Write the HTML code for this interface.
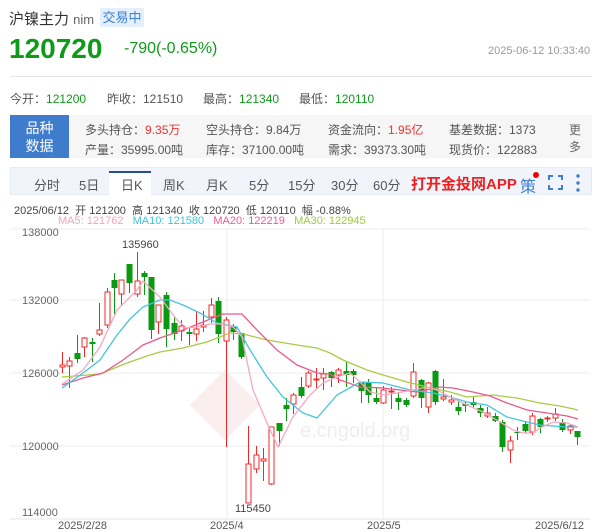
<!DOCTYPE html>
<html><head><meta charset="utf-8"><style>
*{margin:0;padding:0;box-sizing:border-box}
body{width:600px;height:532px;background:#fff;font-family:"Liberation Sans","Noto Sans CJK SC",sans-serif;position:relative;overflow:hidden;color:#333}
.a{position:absolute;white-space:nowrap}
</style></head><body>
<div class="a" style="left:9px;top:8px;font-size:15px;color:#333">沪镍主力 <span style="font-size:13px;color:#666">nim</span></div>
<div class="a" style="left:100px;top:8px;width:44px;height:19px;background:#e3effb;color:#3d7fd0;font-size:13px;line-height:19px;text-align:center">交易中</div>
<div class="a" style="left:9px;top:33px;font-size:28px;font-weight:bold;color:#0f9a1a">120720</div>
<div class="a" style="left:124px;top:40px;font-size:16px;color:#0f9a1a">-790(-0.65%)</div>
<div class="a" style="left:488px;top:45px;font-size:11px;color:#999">2025-06-12 10:33:40</div>
<div class="a" style="left:10px;top:76px;width:582px;height:1px;background:#e6e6e6"></div>
<div class="a" style="left:10px;top:90px;font-size:12px;color:#555">今开：<span style="color:#0f9a1a">121200</span></div>
<div class="a" style="left:107px;top:90px;font-size:12px;color:#555">昨收：121510</div>
<div class="a" style="left:203px;top:90px;font-size:12px;color:#555">最高：<span style="color:#0f9a1a">121340</span></div>
<div class="a" style="left:299px;top:90px;font-size:12px;color:#555">最低：<span style="color:#0f9a1a">120110</span></div>
<div class="a" style="left:10px;top:115px;width:582px;height:43px;background:#f6f6f6"></div>
<div class="a" style="left:10px;top:115px;width:59px;height:43px;background:#3f7ccb;color:#fff;font-size:14px;line-height:18px;text-align:center;padding-top:4px">品种<br>数据</div>
<div class="a" style="left:85px;top:120px;font-size:12px;color:#555;line-height:20px">多头持仓：<span style="color:#e33">9.35万</span><br>产量：35995.00吨</div>
<div class="a" style="left:206px;top:120px;font-size:12px;color:#555;line-height:20px">空头持仓：9.84万<br>库存：37100.00吨</div>
<div class="a" style="left:328px;top:120px;font-size:12px;color:#555;line-height:20px">资金流向：<span style="color:#e33">1.95亿</span><br>需求：39373.30吨</div>
<div class="a" style="left:449px;top:120px;font-size:12px;color:#555;line-height:20px">基差数据：1373<br>现货价：122883</div>
<div class="a" style="left:569px;top:122px;font-size:12px;color:#666;line-height:17px">更<br>多</div>
<div class="a" style="left:10px;top:167px;width:582px;height:28px;background:#f1f5fb;border:1px solid #e4ebf4"></div>
<div class="a" style="left:109px;top:171px;width:42px;height:24px;background:#fff;border-top:2px solid #2a4d8f"></div>
<div class="a" style="top:175px;left:0;font-size:13px;color:#555;width:600px">
<span class="a" style="left:34px">分时</span><span class="a" style="left:79px">5日</span><span class="a" style="left:121px">日K</span><span class="a" style="left:163px">周K</span><span class="a" style="left:206px">月K</span><span class="a" style="left:249px">5分</span><span class="a" style="left:288px">15分</span><span class="a" style="left:331px">30分</span><span class="a" style="left:373px">60分</span>
<span class="a" style="left:411px;top:-2px;font-size:15px;font-weight:bold;color:#f01e1e">打开金投网APP</span>
<span class="a" style="left:520px;top:-2px;font-size:16px;color:#3d7fd0">策</span></div>
<div class="a" style="left:533px;top:172px;width:6px;height:6px;border-radius:50%;background:#e00"></div>
<svg class="a" style="left:548px;top:175px" width="15" height="15"><path d="M1 5V1h4M10 1h4v4M14 10v4h-4M5 14H1v-4" stroke="#3d7fd0" stroke-width="2" fill="none"/></svg>
<svg class="a" style="left:575px;top:173px" width="6" height="20"><circle cx="3" cy="3" r="1.7" fill="#3d7fd0"/><circle cx="3" cy="10" r="1.7" fill="#3d7fd0"/><circle cx="3" cy="17" r="1.7" fill="#3d7fd0"/></svg>
<div class="a" style="left:14px;top:202px;font-size:11px;color:#444">2025/06/12 &nbsp;开 121200 &nbsp;高 121340 &nbsp;收 120720 &nbsp;低 120110 &nbsp;幅 -0.88%</div>
<div class="a" style="left:58px;top:215px;font-size:11px"><span style="color:#f5a3be">MA5: 121762</span> &nbsp;&nbsp;<span style="color:#3cc4dc">MA10: 121580</span> &nbsp;&nbsp;<span style="color:#ef5c8e">MA20: 122219</span> &nbsp;&nbsp;<span style="color:#a0c83c">MA30: 122945</span></div>
<svg id="c" class="a" style="left:0;top:0" width="600" height="532"></svg>
<script>
var s=document.getElementById('c'),h='';
h+='<line x1="10" y1="229" x2="590" y2="229" stroke="#eee"/>';
[300,373,446].forEach(function(y){h+='<line x1="10" y1="'+y+'" x2="590" y2="'+y+'" stroke="#eee"/>'});
h+='<line x1="10" y1="519" x2="590" y2="519" stroke="#e6e6e6"/>';
[227,383].forEach(function(x){h+='<line x1="'+x+'" y1="229" x2="'+x+'" y2="519" stroke="#eee"/>'});
h+='<text x="300" y="437" font-size="20" fill="#f3ecec" font-family="Liberation Sans">e.cngold.org</text>';
h+='<rect x="200" y="380" width="50" height="50" transform="rotate(45 225 405)" fill="#fbeeee"/>';
[[138000,236],[132000,304],[126000,377],[120000,450],[114000,516]].forEach(function(a){h+='<text x="22" y="'+a[1]+'" font-size="11" fill="#666" font-family="Liberation Sans">'+a[0]+'</text>'});
[["2025/2/28",58],["2025/4",210],["2025/5",367],["2025/6/12",535]].forEach(function(a){h+='<text x="'+a[1]+'" y="529" font-size="11" fill="#555" font-family="Liberation Sans">'+a[0]+'</text>'});
h+='<text x="122" y="248" font-size="11" fill="#444" font-family="Liberation Sans">135960</text>';
h+='<text x="235" y="512" font-size="11" fill="#444" font-family="Liberation Sans">115450</text>';
var C=[[62,365,367,352,373,1],[69,361,366,357,388,1],[77,353,359,335,363,0],[84,338,347,337,357,1],[92,342,344,338,362,0],[99,330,334,303,336,1],[107,292,325,288,328,1],[114,280,288,273,315,0],[121,280,294,280,305,1],[129,264,283,264,293,0],[137,281,294,252,297,1],[144,273,277,271,295,0],[151,277,330,277,339,0],[158,305,322,305,334,1],[166,295,329,292,347,0],[174,323,334,317,340,0],[181,326,331,320,341,1],[189,332,334,327,345,0],[196,329,334,311,341,1],[203,325,327,311,332,1],[211,305,317,298,323,1],[218,301,334,297,343,0],[226,320,341,317,447,1],[233,327,332,324,340,0],[241,333,357,333,359,0],[248,464,503,426,503,1],[256,455,469,446,473,1],[263,459,461,448,481,1],[271,427,484,427,485,1],[279,423,431,423,446,0],[286,405,409,398,421,0],[293,395,404,393,414,1],[301,387,396,377,398,0],[308,373,386,371,388,1],[316,379,380,368,388,1],[323,374,378,368,390,1],[331,372,378,371,387,0],[338,370,375,368,383,1],[346,371,375,362,387,0],[353,371,375,369,383,0],[361,382,391,382,403,0],[368,382,395,379,403,0],[376,398,402,388,404,0],[383,390,403,386,404,1],[391,391,392,387,409,1],[398,398,402,392,410,0],[406,400,405,398,407,0],[413,372,396,363,398,1],[421,380,398,379,408,0],[428,383,407,382,413,1],[435,371,402,370,405,0],[443,397,399,379,401,1],[451,400,402,395,405,1],[458,407,411,401,415,0],[465,404,406,401,412,0],[473,402,405,396,408,0],[480,408,413,405,417,0],[487,413,416,407,418,1],[495,416,421,413,422,0],[502,422,447,420,452,0],[510,441,450,436,463,1],[517,432,433,427,440,0],[525,424,431,422,433,0],[532,416,432,413,435,1],[540,419,427,418,433,0],[547,418,419,416,422,1],[555,414,418,408,421,1],[562,422,430,419,432,0],[570,426,430,425,434,1],[577,431,437,431,445,0]];
C.forEach(function(c){var col=c[5]?'#f02828':'#0a9a12';h+='<line x1="'+(c[0]+.5)+'" y1="'+c[3]+'" x2="'+(c[0]+.5)+'" y2="'+c[4]+'" stroke="'+col+'"/>';var hh=Math.max(1,c[2]-c[1]);if(c[5])h+='<rect x="'+(c[0]-2)+'" y="'+c[1]+'" width="5" height="'+hh+'" fill="#fff" stroke="'+col+'"/>';else h+='<rect x="'+(c[0]-2.5)+'" y="'+c[1]+'" width="6" height="'+hh+'" fill="'+col+'"/>'});
function L(p,col){h+='<polyline points="'+p+'" fill="none" stroke="'+col+'" stroke-width="1.3"/>'}
L("62,377 100,374 127,363 147,356 160,352 183,348 207,342 230,333 243,334 267,340 297,345 317,348 330,353 343,360 367,370 383,375 407,382 427,387 450,392 467,397 493,395 517,398 540,403 560,406 578,410","#a8cc44");
L("62,385 83,378 103,373 123,360 143,345 160,338 183,330 203,322 223,314 242,314 257,330 277,350 297,365 317,373 330,374 340,380 360,387 383,388 400,390 417,392 440,387 453,388 473,392 490,396 507,403 527,410 547,413 567,416 578,419","#ec5a8a");
L("62,388 83,373 100,360 117,335 130,319 143,307 160,300 170,300 183,305 200,313 217,323 227,325 237,327 250,350 267,377 283,397 303,413 317,418 337,395 360,382 383,383 410,390 433,393 450,397 467,402 487,405 507,417 527,422 540,425 567,427 578,427","#45c6de");
L("62,384 83,370 100,347 117,310 137,290 143,281 160,297 177,320 187,328 197,327 210,324 220,324 233,327 242,337 253,390 267,423 278,447 293,417 310,395 323,383 337,377 350,373 358,380 370,392 383,395 397,393 413,390 427,387 437,390 450,397 467,405 483,412 500,422 513,430 523,433 533,433 540,428 553,422 567,423 578,427","#f7a8c2");
s.innerHTML=h;
</script>
</body></html>
